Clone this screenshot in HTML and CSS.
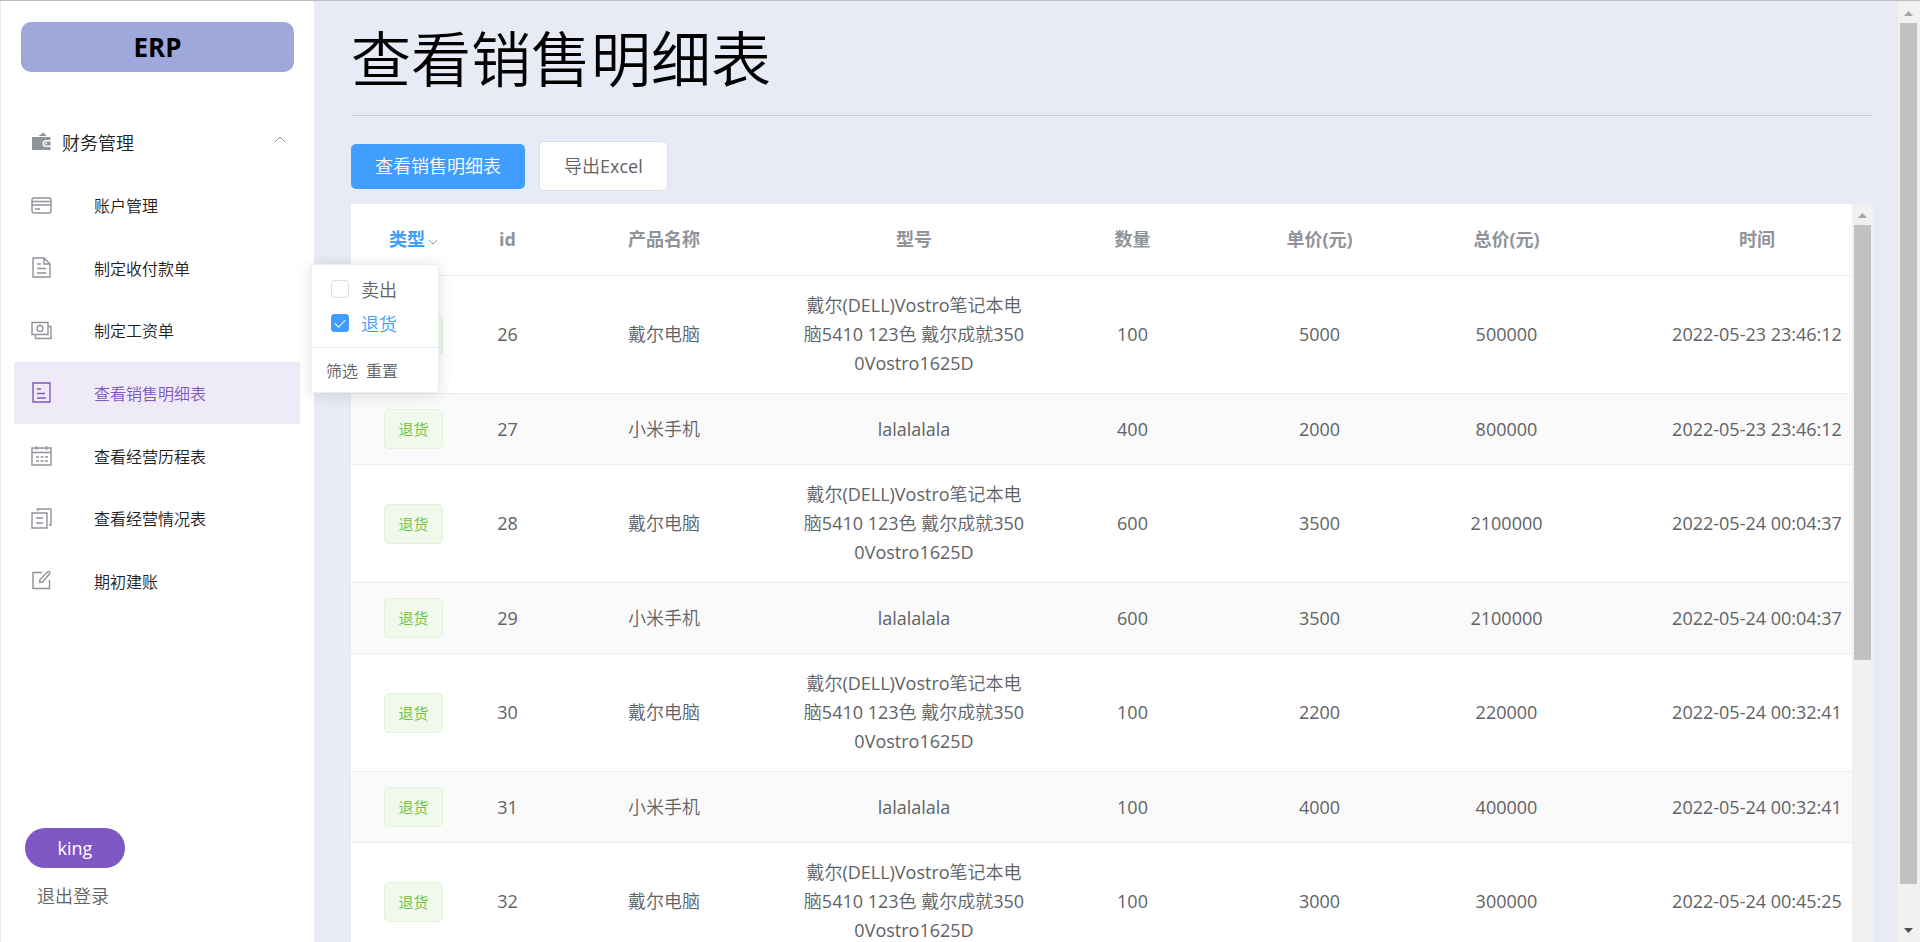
FILE: index.html
```html
<!DOCTYPE html>
<html lang="zh-CN">
<head>
<meta charset="utf-8">
<title>ERP</title>
<link rel="stylesheet" href="styles.css">
</head>
<body>
<div class="app">
  <aside class="sidebar">
    <div class="brand">ERP</div>
    <nav class="nav">
      <button class="group" type="button" aria-expanded="true">
        <svg class="icon" viewBox="0 0 21 21"><path fill="currentColor" d="M1 6h18.500v3h-4.500a3.500 3.500 0 0 0 0 7h4.500v3H1zM7.500 5l5-3.500L15.500 5zM15 10.500h4.500v4H15a2 2 0 0 1 0-4z"/><circle cx="15" cy="12.500" r="1" fill="#fff"/></svg>
        <span>财务管理</span>
        <svg class="arrow" viewBox="0 0 12 8"><path class="line thin" d="M1 7l5-5 5 5"/></svg>
      </button>
      <ul class="menu">
        <li><a class="item" href="#"><svg class="icon" viewBox="0 0 21 21"><rect class="line" x="1" y="3" width="19" height="15" rx="2"/><path class="line" d="M1 6.500h19M1 10h19M4 14h5"/></svg><span>账户管理</span></a></li>
        <li><a class="item" href="#"><svg class="icon" viewBox="0 0 21 21"><path class="line" d="M2 1h11l6 6v13H2zM13 1v6H19M6 7h4M6 11.500h9M6 16h9"/></svg><span>制定收付款单</span></a></li>
        <li><a class="item" href="#"><svg class="icon" viewBox="0 0 21 21"><path class="line" d="M1 2.500h16v12H1zM17 6.500h3v12H4.500v-4"/><circle class="line" cx="9" cy="8.500" r="3"/></svg><span>制定工资单</span></a></li>
        <li><a class="item active" href="#"><svg class="icon" viewBox="0 0 21 21"><path class="line" d="M2 1h17v19H2zM6 7h4M6 11.500h8M6 16h9"/></svg><span>查看销售明细表</span></a></li>
        <li><a class="item" href="#"><svg class="icon" viewBox="0 0 21 21"><path class="line" d="M1 3h19v17H1zM1 7.500h19M5.500 1v4M15.500 1v4"/><path class="line" stroke-dasharray="3 1.500" d="M5 12h12M5 16h12"/></svg><span>查看经营历程表</span></a></li>
        <li><a class="item" href="#"><svg class="icon" viewBox="0 0 21 21"><path class="line" d="M1 5h15v15H1zM6.500 3V1H20v16h-2M5 10h7M5 15h7"/></svg><span>查看经营情况表</span></a></li>
        <li><a class="item" href="#"><svg class="icon" viewBox="0 0 21 21"><path class="line" d="M11 2.500H2v16h16.500V10M8.500 12.500l.5-3 7.500-7.500q1-1 2 0t0 2L11.500 12z"/></svg><span>期初建账</span></a></li>
      </ul>
    </nav>
    <div class="account">
      <span class="user">king</span>
      <button class="logout" type="button">退出登录</button>
    </div>
  </aside>

  <main class="main">
    <h1 class="title">查看销售明细表</h1>
    <div class="toolbar">
      <button class="btn primary" type="button">查看销售明细表</button>
      <button class="btn" type="button">导出Excel</button>
    </div>
    <div class="panel">
      <div class="table-wrap">
        <table class="table">
          <colgroup><col class="c-type"><col class="c-id"><col class="c-name"><col class="c-model"><col class="c-num"><col class="c-num"><col class="c-num"><col class="c-time"></colgroup>
          <thead>
            <tr><th class="filtered">类型<svg class="caret" viewBox="0 0 10 6"><path class="line thin" d="M1 1l4 4 4-4"/></svg></th><th>id</th><th>产品名称</th><th>型号</th><th>数量</th><th>单价(元)</th><th>总价(元)</th><th>时间</th></tr>
          </thead>
          <tbody>
            <tr><td><span class="tag">退货</span></td><td>26</td><td>戴尔电脑</td><td>戴尔(DELL)Vostro笔记本电脑5410 123色 戴尔成就3500Vostro1625D</td><td>100</td><td>5000</td><td>500000</td><td>2022-05-23 23:46:12</td></tr>
            <tr><td><span class="tag">退货</span></td><td>27</td><td>小米手机</td><td>lalalalala</td><td>400</td><td>2000</td><td>800000</td><td>2022-05-23 23:46:12</td></tr>
            <tr><td><span class="tag">退货</span></td><td>28</td><td>戴尔电脑</td><td>戴尔(DELL)Vostro笔记本电脑5410 123色 戴尔成就3500Vostro1625D</td><td>600</td><td>3500</td><td>2100000</td><td>2022-05-24 00:04:37</td></tr>
            <tr><td><span class="tag">退货</span></td><td>29</td><td>小米手机</td><td>lalalalala</td><td>600</td><td>3500</td><td>2100000</td><td>2022-05-24 00:04:37</td></tr>
            <tr><td><span class="tag">退货</span></td><td>30</td><td>戴尔电脑</td><td>戴尔(DELL)Vostro笔记本电脑5410 123色 戴尔成就3500Vostro1625D</td><td>100</td><td>2200</td><td>220000</td><td>2022-05-24 00:32:41</td></tr>
            <tr><td><span class="tag">退货</span></td><td>31</td><td>小米手机</td><td>lalalalala</td><td>100</td><td>4000</td><td>400000</td><td>2022-05-24 00:32:41</td></tr>
            <tr><td><span class="tag">退货</span></td><td>32</td><td>戴尔电脑</td><td>戴尔(DELL)Vostro笔记本电脑5410 123色 戴尔成就3500Vostro1625D</td><td>100</td><td>3000</td><td>300000</td><td>2022-05-24 00:45:25</td></tr>
          </tbody>
        </table>
      </div>
      <div class="scrollbar" aria-hidden="true"><span class="up"></span><span class="thumb inner-thumb"></span></div>
      <form class="filter">
        <div class="options">
          <label class="option"><input type="checkbox"><span>卖出</span></label>
          <label class="option"><input type="checkbox" checked><span>退货</span></label>
        </div>
        <div class="actions"><button type="button">筛选</button><button type="button">重置</button></div>
      </form>
    </div>
  </main>
  <div class="scrollbar page-scroll" aria-hidden="true"><span class="up"></span><span class="thumb"></span><span class="down"></span></div>
</div>
</body>
</html>
```

FILE: styles.css
```css
* { box-sizing: border-box; }
body {
  margin: 0;
  font-family: "Open Sans", "Noto Sans CJK SC DemiLight", "Noto Sans CJK SC", sans-serif;
  font-size: 18px;
  color: #606266;
}
button { font: inherit; color: inherit; background: none; border: 0; padding: 0; cursor: pointer; }
.app {
  display: flex;
  height: 100vh;
  overflow: hidden;
  border-top: 1px solid #bdbdbd;
}
.line { fill: none; stroke: currentColor; stroke-width: 1.4; }
.line.thin { stroke-width: 1; }
.icon { width: 21px; height: 21px; flex: none; color: #909399; }

.sidebar {
  flex: none;
  width: 314px;
  display: flex;
  flex-direction: column;
  padding: 21px 14px 0 13px;
  border-left: 1px solid #ebebeb;
  background: #fff;
}
.brand {
  margin: 0 6px 0 7px;
  height: 50px;
  line-height: 50px;
  border-radius: 10px;
  background: #9fa8da;
  color: #000;
  font-size: 26px;
  font-weight: 700;
  text-align: center;
}
.nav { margin-top: 37px; color: #212121; }
.group {
  display: flex;
  align-items: center;
  width: 100%;
  height: 65px;
  padding: 0 14px 0 17px;
  gap: 10px;
}
.arrow { width: 12px; height: 8px; margin: 0 0 6px auto; color: #909399; }
.menu {
  display: grid;
  grid-auto-rows: 1fr;
  height: 438px;
  margin: 0;
  padding: 0;
  list-style: none;
  font-size: 16px;
}
.item {
  display: flex;
  align-items: center;
  height: 100%;
  padding-left: 17px;
  gap: 42px;
  color: inherit;
  text-decoration: none;
}
.item.active { background: #eeeaf8; color: #7e57c2; }
.active .icon { color: inherit; }
.account {
  display: flex;
  flex-direction: column;
  align-items: flex-start;
  gap: 13px;
  margin: auto 0 31px 11px;
}
.user {
  width: 100px;
  height: 40px;
  line-height: 40px;
  border-radius: 20px;
  background: #7e57c2;
  color: #fff;
  text-align: center;
}
.logout { margin-left: 12px; line-height: 30px; }

.main {
  flex: 1;
  min-width: 0;
  display: flex;
  flex-direction: column;
  padding: 0 25px 0 37px;
  background: #e8eaf6;
}
.title {
  margin: 0;
  height: 115px;
  flex: none;
  line-height: 116px;
  border-bottom: 1px solid #c8cad2;
  color: #000;
  font-size: 60px;
  font-weight: 350;
}
.toolbar { display: flex; align-items: center; gap: 14px; margin: 25px 0 13px; }
.btn {
  height: 50px;
  padding: 0 24px 2px;
  border: 1px solid #dcdfe6;
  border-radius: 5px;
  background: #fff;
}
.btn.primary { height: 45px; border: 0; background: #409eff; color: #fff; }

.panel { position: relative; display: flex; flex: 1; min-height: 0; }
.table-wrap { flex: 1; min-width: 0; overflow: hidden; background: #fff; }
.table {
  width: 1563px;
  table-layout: fixed;
  border-collapse: separate;
  border-spacing: 0;
  line-height: 29px;
  text-align: center;
}
.c-type { width: 125px; }
.c-id { width: 63px; }
.c-name, .c-model { width: 250px; }
.c-num { width: 187px; }
.c-time { width: 314px; }
th, td { padding: 15px 12px; border-bottom: 1px solid #ebeef5; word-break: break-all; }
th { height: 72px; color: #909399; font-family: "Open Sans", "Noto Sans CJK SC", sans-serif; font-weight: 700; }
td:first-child { padding-top: 0; padding-bottom: 0; }
tbody tr { height: 71px; }
tbody tr:nth-child(even) td { background: #fafafa; }
.filtered { color: #409eff; }
.caret { width: 10px; height: 6px; margin-left: 3px; color: #909399; vertical-align: 1px; }
.tag {
  display: inline-block;
  height: 40px;
  padding: 0 13px;
  border: 1px solid #e1f3d8;
  border-radius: 5px;
  background: #f0f9eb;
  color: #67c23a;
  font-size: 15px;
  line-height: 38px;
  vertical-align: middle;
}

.scrollbar {
  flex: none;
  width: 21px;
  display: flex;
  flex-direction: column;
  align-items: center;
  background: #f1f1f1;
}
.page-scroll { width: 22px; padding: 1px 1px 0 0; }
.up, .down { flex: none; width: 9px; height: 5px; }
.up { margin: 9px 0 7px; background: #a3a3a3; clip-path: polygon(50% 0, 100% 100%, 0 100%); }
.down { margin: 44px 0 9px; background: #505050; clip-path: polygon(0 0, 100% 0, 50% 100%); }
.thumb { width: 17px; flex: 1; background: #c1c1c1; }
.inner-thumb { flex: 0 0 59%; }

.filter {
  position: absolute;
  left: -40px;
  top: 60px;
  width: 128px;
  border: 1px solid #ebeef5;
  border-radius: 3px;
  background: #fff;
  box-shadow: 0 2px 15px rgba(0, 0, 0, .12);
}
.options { display: grid; gap: 4px; padding: 9px 0 9px 19px; border-bottom: 1px solid #ebeef5; }
.option { display: flex; align-items: center; gap: 12px; height: 30px; }
.option input {
  appearance: none;
  width: 18px;
  height: 18px;
  margin: 0;
  border: 1px solid #dcdfe6;
  border-radius: 3px;
  background: #fff;
}
.option input:checked { border-color: #409eff; background: #409eff; display: grid; place-items: center; }
.option input:checked::after {
  content: "";
  width: 5px;
  height: 9px;
  margin-bottom: 3px;
  border: solid #fff;
  border-width: 0 1px 1px 0;
  transform: rotate(45deg);
}
.option input:checked + span { color: #409eff; }
.actions { display: flex; gap: 8px; padding: 11px 14px 9px; font-size: 16px; line-height: 24px; }
```
